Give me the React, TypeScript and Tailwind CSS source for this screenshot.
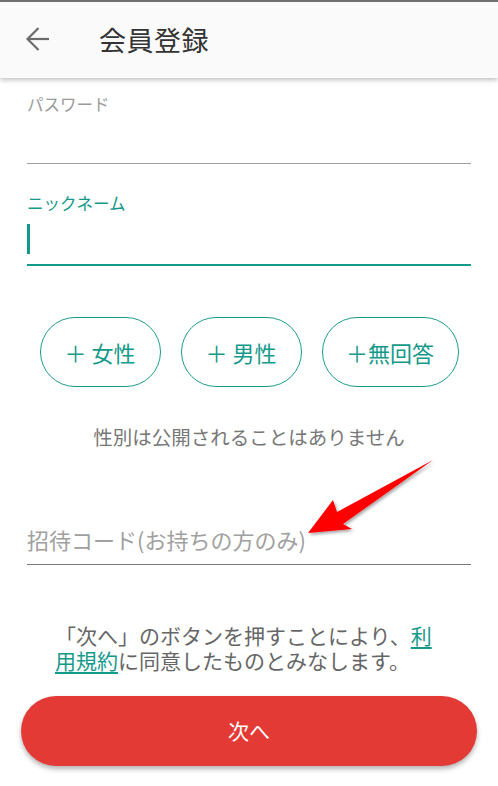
import { useState } from 'react';

const font = { fontFamily: '"Noto Sans CJK JP", Roboto, sans-serif' };

const GenderButton = ({ label, width }: { label: string; width: string }) => (
  <button
    className={`h-[70px] ${width} rounded-full border-[1.5px] border-[#1a9c8c] text-[22px] text-[#15998a] flex items-center justify-center bg-white`}
  >
    {label}
  </button>
);

const App = () => {
  const [nickname, setNickname] = useState('');

  return (
    <div className="relative w-[498px] h-[786px] bg-white overflow-hidden" style={font}>
      {/* Header */}
      <header className="h-[78px] bg-[#fafafa] border-t-2 border-[#707070] shadow-[0_2px_5px_rgba(0,0,0,0.25)] flex items-center relative z-10">
        <svg className="ml-[26px] mt-[-2px]" width="24" height="24" viewBox="0 0 24 24" fill="none" stroke="#6b6b6b" strokeWidth="2.2">
          <path d="M23 12H1.5" />
          <path d="M12.5 1L1.5 12l11 11" />
        </svg>
        <h1 className="ml-[49px] mt-[-1px] text-[27px] leading-[34px] text-[#333] font-normal tracking-[0.5px]">会員登録</h1>
      </header>

      <main className="px-[27px]">
        {/* Password */}
        <div className="pt-[16px]">
          <label className="block text-[16.5px] leading-[20px] text-[#9a9a9a]">パスワード</label>
          <div className="h-[50px] border-b-[1.5px] border-[#9e9e9e]" />
        </div>

        {/* Nickname */}
        <div className="pt-[29px]">
          <label className="block text-[16.5px] leading-[20px] text-[#15998a]">ニックネーム</label>
          <div className="h-[53px] border-b-2 border-[#15998a] flex items-center">
            <input
              value={nickname}
              onChange={e => setNickname(e.target.value)}
              className="w-full h-[30px] outline-none text-[18px] caret-[#15998a]"
            />
            <div className="absolute w-[2.5px] h-[30px] bg-[#15998a]" />
          </div>
        </div>

        {/* Gender */}
        <div className="mt-[51px] flex justify-center gap-[20px]">
          <GenderButton label="＋ 女性" width="w-[121px]" />
          <GenderButton label="＋ 男性" width="w-[121px]" />
          <GenderButton label="＋無回答" width="w-[137px]" />
        </div>
        <p className="mt-[37px] text-center text-[19.5px] leading-[26px] text-[#777]">性別は公開されることはありません</p>

        {/* Invite code */}
        <div className="mt-[64px] h-[51px] border-b-[1.5px] border-[#777] flex items-center pt-[1px]">
          <span className="text-[22px] text-[#a0a0a0]">招待コード(お持ちの方のみ)</span>
        </div>

        {/* Terms */}
        <div className="mt-[58px] ml-[28px] text-[21px] leading-[25px] text-[#666]">
          <div>
            「次へ」のボタンを押すことにより、
            <a className="text-[#15998a] underline underline-offset-[3px]">利</a>
          </div>
          <div>
            <a className="text-[#15998a] underline underline-offset-[3px]">用規約</a>
            に同意したものとみなします。
          </div>
        </div>
      </main>

      {/* Next button */}
      <div className="px-[21px] mt-[23px]">
        <button className="w-full h-[70px] rounded-full bg-[#e43a36] text-white text-[21px] shadow-[0_3px_5px_rgba(0,0,0,0.3)]">
          次へ
        </button>
      </div>

      {/* Annotation arrow */}
      <svg className="absolute left-0 top-0 pointer-events-none" width="498" height="786">
        <defs>
          <filter id="sh" x="-20%" y="-20%" width="140%" height="140%">
            <feDropShadow dx="1.5" dy="2" stdDeviation="1.5" floodColor="#000" floodOpacity="0.35" />
          </filter>
        </defs>
        <polygon points="308,533 333,500 337,512 433,460 343,524 352,529" fill="#ff0000" filter="url(#sh)" />
      </svg>
    </div>
  );
};

export default App;
